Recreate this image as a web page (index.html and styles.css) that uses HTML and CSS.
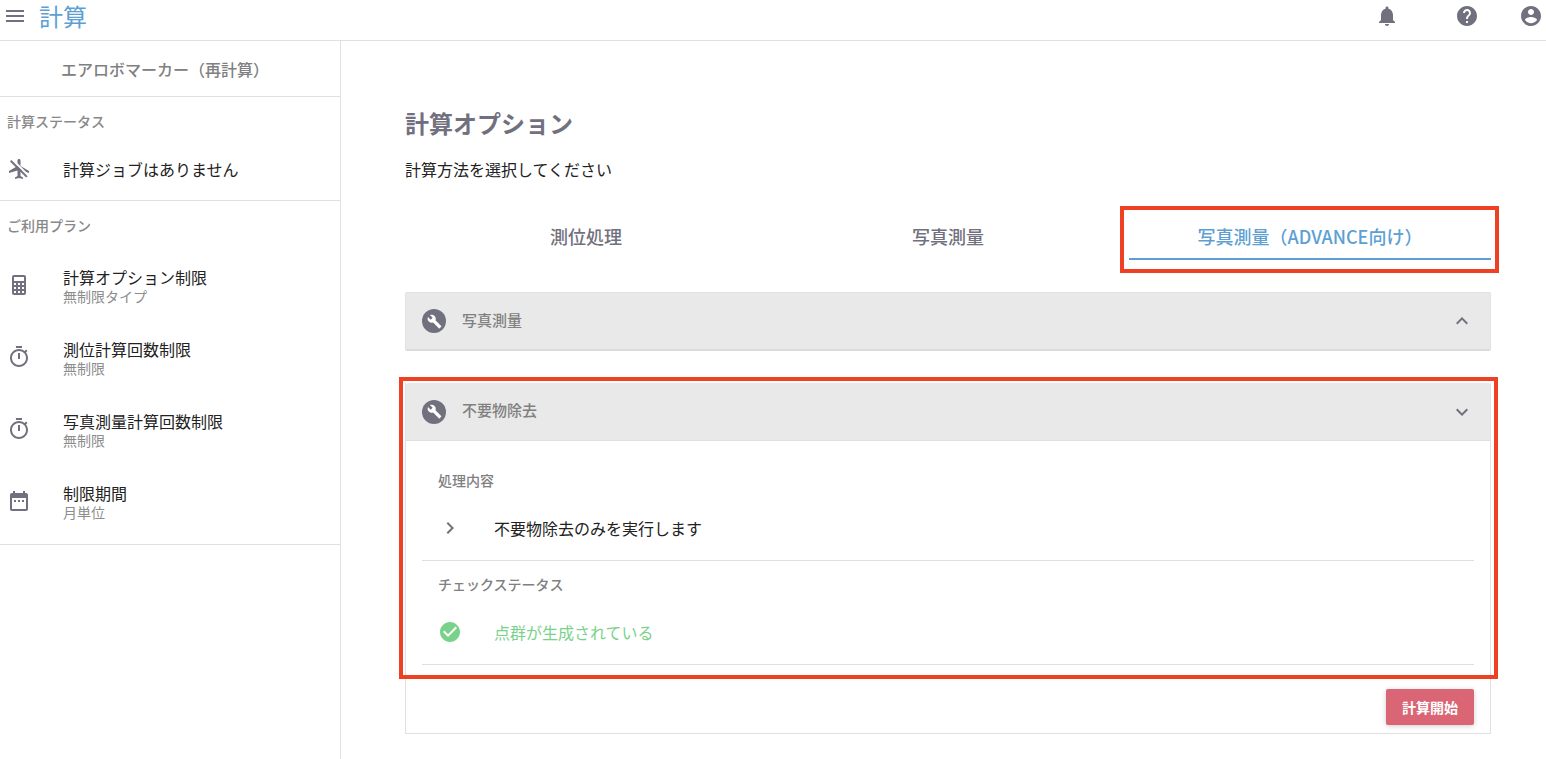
FILE: index.html
```html
<!DOCTYPE html>
<html lang="ja">
<head>
<meta charset="utf-8">
<title>計算</title>
<link rel="stylesheet" href="styles.css">
</head>
<body>
<header class="topbar">
  <svg class="icon menu" viewBox="0 0 24 24"><path d="M3 18h18v-2H3v2zm0-5h18v-2H3v2zm0-7v2h18V6H3z"/></svg>
  <h1 class="app-title">計算</h1>
  <div class="top-actions">
    <svg class="icon bell" viewBox="0 0 24 24"><path d="M12 22c1.1 0 2-.9 2-2h-4c0 1.1.89 2 2 2zm6-6v-5c0-3.07-1.64-5.64-4.5-6.32V4c0-.83-.67-1.5-1.5-1.5s-1.5.67-1.5 1.5v.68C7.63 5.36 6 7.92 6 11v5l-2 2v1h16v-1l-2-2z"/></svg>
    <svg class="icon help" viewBox="0 0 24 24"><path d="M12 2C6.48 2 2 6.48 2 12s4.48 10 10 10 10-4.48 10-10S17.52 2 12 2zm1 17h-2v-2h2v2zm2.07-7.75l-.9.92C13.45 12.9 13 13.5 13 15h-2v-.5c0-1.1.45-2.1 1.17-2.83l1.24-1.26c.37-.36.59-.86.59-1.41 0-1.1-.9-2-2-2s-2 .9-2 2H8c0-2.21 1.79-4 4-4s4 1.79 4 4c0 .88-.36 1.68-.93 2.25z"/></svg>
    <svg class="icon" viewBox="0 0 24 24"><path d="M12 2C6.48 2 2 6.48 2 12s4.48 10 10 10 10-4.48 10-10S17.52 2 12 2zm0 3c1.66 0 3 1.34 3 3s-1.34 3-3 3-3-1.34-3-3 1.34-3 3-3zm0 14.2c-2.5 0-4.71-1.28-6-3.22.03-1.99 4-3.08 6-3.08 1.99 0 5.97 1.09 6 3.08-1.29 1.94-3.5 3.22-6 3.22z"/></svg>
  </div>
</header>
<div class="layout">
  <aside class="sidebar">
    <div class="side-title">エアロボマーカー（再計算）</div>
    <section class="side-section status">
      <div class="side-label">計算ステータス</div>
      <div class="side-row single">
        <svg class="icon" viewBox="0 0 24 24"><path d="M10.5 9V3.500c0-.83.67-1.500 1.500-1.500s1.500.67 1.500 1.500V9l8.500 5v2l-8.500-2.500V19l2.500 1.500V22L12 21l-4 1v-1.500l2.500-1.500v-5.500L2 16v-2l8.500-5z"/><path class="gap" d="M4.400 3L5.800 1.600 22 17.800 20.600 19.200z"/><path d="M3 4.400L4.400 3 20.600 19.200 19.200 20.600z"/></svg>
        <div class="side-main">計算ジョブはありません</div>
      </div>
    </section>
    <section class="side-section plan">
      <div class="side-label">ご利用プラン</div>
      <div class="plan-list">
        <div class="side-row double">
          <svg class="icon" viewBox="0 0 24 24"><path d="M7,2H17A2,2 0 0,1 19,4V20A2,2 0 0,1 17,22H7A2,2 0 0,1 5,20V4A2,2 0 0,1 7,2M7,4V8H17V4H7M7,10V12H9V10H7M11,10V12H13V10H11M15,10V12H17V10H15M7,14V16H9V14H7M11,14V16H13V14H11M15,14V16H17V14H15M7,18V20H9V18H7M11,18V20H13V18H11M15,18V20H17V18H15Z"/></svg>
          <div class="side-text"><div class="side-main">計算オプション制限</div><div class="side-sub">無制限タイプ</div></div>
        </div>
        <div class="side-row double">
          <svg class="icon" viewBox="0 0 24 24"><path d="M9 1h6v2H9zm10.03 6.39l1.42-1.42c-.43-.51-.9-.99-1.41-1.41l-1.42 1.42C16.07 4.74 14.12 4 12 4c-4.97 0-9 4.03-9 9s4.02 9 9 9 9-4.03 9-9c0-2.12-.74-4.07-1.97-5.61zM12 20c-3.87 0-7-3.13-7-7s3.13-7 7-7 7 3.13 7 7-3.13 7-7 7zM11 8h2v6h-2z"/></svg>
          <div class="side-text"><div class="side-main">測位計算回数制限</div><div class="side-sub">無制限</div></div>
        </div>
        <div class="side-row double">
          <svg class="icon" viewBox="0 0 24 24"><path d="M9 1h6v2H9zm10.03 6.39l1.42-1.42c-.43-.51-.9-.99-1.41-1.41l-1.42 1.42C16.07 4.74 14.12 4 12 4c-4.97 0-9 4.03-9 9s4.02 9 9 9 9-4.03 9-9c0-2.12-.74-4.07-1.97-5.61zM12 20c-3.87 0-7-3.13-7-7s3.13-7 7-7 7 3.13 7 7-3.13 7-7 7zM11 8h2v6h-2z"/></svg>
          <div class="side-text"><div class="side-main">写真測量計算回数制限</div><div class="side-sub">無制限</div></div>
        </div>
        <div class="side-row double">
          <svg class="icon" viewBox="0 0 24 24"><path d="M9 11H7v2h2v-2zm4 0h-2v2h2v-2zm4 0h-2v2h2v-2zm2-7h-1V2h-2v2H8V2H6v2H5c-1.11 0-1.99.9-1.99 2L3 20c0 1.1.89 2 2 2h14c1.1 0 2-.9 2-2V6c0-1.1-.9-2-2-2zm0 16H5V9h14v11z"/></svg>
          <div class="side-text"><div class="side-main">制限期間</div><div class="side-sub">月単位</div></div>
        </div>
      </div>
    </section>
  </aside>
  <main class="content">
    <h2 class="page-title">計算オプション</h2>
    <p class="page-sub">計算方法を選択してください</p>
    <nav class="tabs">
      <div class="tab">測位処理</div>
      <div class="tab">写真測量</div>
      <div class="tab active">写真測量（ADVANCE向け）</div>
      <div class="callout callout-tab"></div>
    </nav>
    <section class="panel-head closed">
      <span class="badge"><svg viewBox="0 0 24 24"><path d="M22.7 19l-9.1-9.1c.9-2.3.4-5-1.5-6.9-2-2-5-2.4-7.4-1.3L9 6 6 9 1.6 4.7C.4 7.1.9 10.1 2.9 12.1c1.9 1.9 4.6 2.4 6.9 1.5l9.1 9.1c.4.4 1 .4 1.4 0l2.3-2.3c.5-.4.5-1.1.1-1.4z"/></svg></span>
      <span class="panel-title">写真測量</span>
      <svg class="icon chev" viewBox="0 0 24 24"><path d="M12 8l-6 6 1.41 1.41L12 10.83l4.59 4.58L18 14z"/></svg>
    </section>
    <section class="card">
      <div class="panel-head">
        <span class="badge"><svg viewBox="0 0 24 24"><path d="M22.7 19l-9.1-9.1c.9-2.3.4-5-1.5-6.9-2-2-5-2.4-7.4-1.3L9 6 6 9 1.6 4.7C.4 7.1.9 10.1 2.9 12.1c1.9 1.9 4.6 2.4 6.9 1.5l9.1 9.1c.4.4 1 .4 1.4 0l2.3-2.3c.5-.4.5-1.1.1-1.4z"/></svg></span>
        <span class="panel-title">不要物除去</span>
        <svg class="icon chev" viewBox="0 0 24 24"><path d="M16.59 8.59L12 13.17 7.41 8.59 6 10l6 6 6-6z"/></svg>
      </div>
      <div class="card-body">
        <div class="block">
          <div class="block-label">処理内容</div>
          <div class="block-row">
            <svg class="icon" viewBox="0 0 24 24"><path d="M10 6L8.59 7.41 13.17 12l-4.58 4.59L10 18l6-6z"/></svg>
            <span>不要物除去のみを実行します</span>
          </div>
        </div>
        <div class="block">
          <div class="block-label">チェックステータス</div>
          <div class="block-row ok">
            <svg class="icon" viewBox="0 0 24 24"><path d="M12 2C6.48 2 2 6.48 2 12s4.48 10 10 10 10-4.48 10-10S17.52 2 12 2zm-2 15l-5-5 1.41-1.41L10 14.17l7.59-7.59L19 8l-9 9z"/></svg>
            <span>点群が生成されている</span>
          </div>
        </div>
      </div>
      <div class="card-foot"><button class="start-btn">計算開始</button></div>
      <div class="callout callout-card"></div>
    </section>
  </main>
</div>
</body>
</html>
```
FILE: styles.css
```css
* { box-sizing: border-box; }
html, body { margin: 0; padding: 0; height: 100%; overflow: hidden; }
body {
  background: #fff;
  color: #222;
  font-family: "Noto Sans CJK JP", "Noto Sans", sans-serif;
  font-size: 16px;
}
.icon { width: 24px; height: 24px; fill: #71707e; flex: none; display: block; }
.icon .gap { fill: #fff; }

.topbar {
  height: 41px;
  border-bottom: 1px solid #e0e0e0;
  display: flex;
  align-items: flex-start;
  padding: 4px 3px 0;
}
.app-title {
  margin: -4px 0 0 12px;
  font-size: 24px;
  line-height: 32px;
  font-weight: 400;
  color: #5e9fd3;
}
.top-actions { margin-left: auto; display: flex; gap: 40px; }
.top-actions .bell { margin-right: 16px; }

.layout { display: flex; height: 718px; }
.sidebar { width: 341px; flex: none; border-right: 1px solid #e0e0e0; }
.side-title {
  height: 56px;
  border-bottom: 1px solid #e0e0e0;
  display: flex;
  align-items: center;
  justify-content: center;
  padding-right: 10px;
  font-size: 16px;
  font-weight: 500;
  color: #808080;
}
.side-section { border-bottom: 1px solid #e0e0e0; padding-top: 15px; }
.side-section.status { height: 104px; }
.side-section.plan { height: 344px; }
.side-label {
  padding-left: 7px;
  font-size: 14px;
  line-height: 18px;
  font-weight: 500;
  color: #888;
}
.side-row { display: flex; align-items: center; gap: 32px; padding-left: 7px; }
.side-row.single { height: 48px; margin-top: 15px; }
.side-row.double { height: 72px; }
.side-row.double .icon { margin-bottom: 2px; }
.plan-list { margin-top: 16px; }
.side-main { font-size: 16px; line-height: 20px; color: #222; }
.side-sub { font-size: 14px; line-height: 18px; color: #8c8c8c; }

.content { flex: 1; padding: 64px 55px 0 64px; position: relative; min-width: 0; }
.page-title { margin: 0; font-size: 24px; line-height: 36px; font-weight: 700; color: #71707e; }
.page-sub { margin: 16px 0 0; font-size: 16px; line-height: 24px; color: #222; }

.tabs { display: grid; grid-template-columns: repeat(3, 1fr); margin-top: 31px; position: relative; }
.tab {
  height: 48px;
  display: flex;
  align-items: center;
  justify-content: center;
  font-size: 18px;
  font-weight: 500;
  color: #71707e;
}
.tab.active { color: #5e9fd3; border-bottom: 2px solid #5e9fd3; padding-top: 2px; }

.panel-head {
  height: 58px;
  background: #e9e9e9;
  display: flex;
  align-items: center;
  padding: 0 17px 0 16px;
  border-radius: 2px 2px 0 0;
}
.panel-head.closed {
  height: 59px;
  margin-top: 32px;
  border: 1px solid #e2e2e2;
  border-bottom: 2px solid #dcdcdc;
  padding: 0 16px;
  border-radius: 2px;
}
.badge {
  width: 24px; height: 24px;
  border-radius: 50%;
  background: #71707e;
  display: flex;
  align-items: center;
  justify-content: center;
  flex: none;
}
.badge svg { width: 15px; height: 15px; fill: #fff; display: block; }
.panel-title { margin-left: 16px; padding-bottom: 4px; font-size: 15px; font-weight: 500; color: #808080; }
.chev { margin-left: auto; }

.card {
  margin-top: 32px;
  position: relative;
  border: 1px solid #e0e0e0;
  border-top: 0;
  height: 351px;
}
.card .panel-head { border-bottom: 1px solid #e0e0e0; padding: 0 16px; }
.card-body { padding: 0 16px; }
.block { height: 104px; border-bottom: 1px solid #e0e0e0; padding-top: 14px; }
.card-body .block:first-child { height: 120px; padding-top: 30px; }
.block-label { padding-left: 16px; font-size: 14px; line-height: 18px; font-weight: 500; color: #808080; }
.block-row { display: flex; align-items: center; gap: 32px; padding-left: 16px; margin-top: 15px; height: 48px; font-size: 16px; color: #222; }
.block-row.ok { color: #79d28a; }
.block-row.ok .icon { fill: #79d28a; }
.card-foot { display: flex; justify-content: flex-end; padding: 24px 16px 0; }
.start-btn {
  width: 88px;
  height: 36px;
  border: 0;
  border-radius: 2px;
  background: #d96575;
  color: #fff;
  font-family: inherit;
  font-size: 14px;
  font-weight: 700;
  box-shadow: 0 1px 5px rgba(0,0,0,.2);
}

.callout { position: absolute; border: 4px solid #ee4023; pointer-events: none; }
.callout-tab { left: 715px; right: -8px; top: -6px; height: 67px; }
.callout-card { left: -7px; right: -8px; top: -6px; height: 302px; }
```
